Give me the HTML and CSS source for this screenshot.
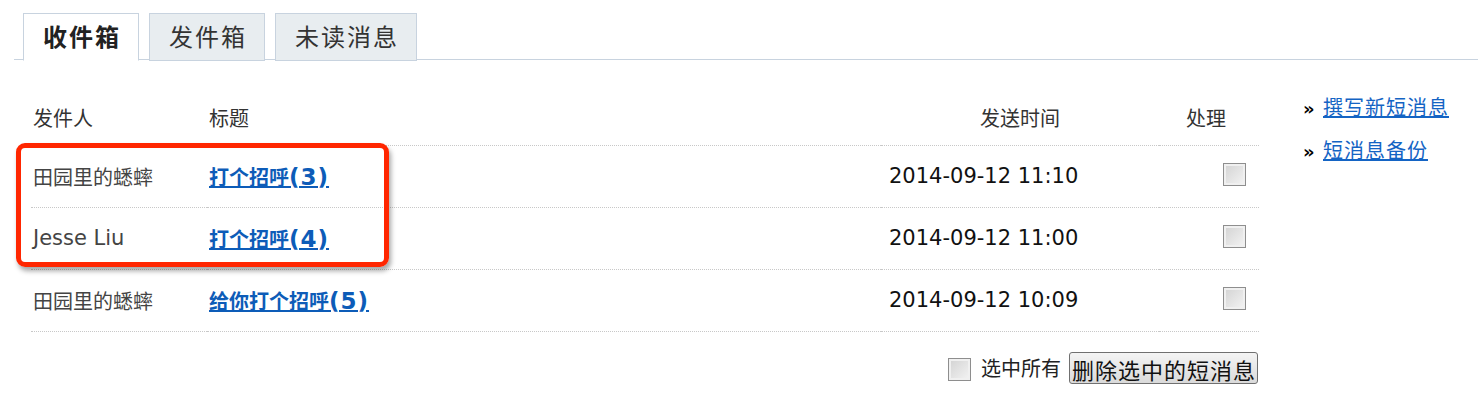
FILE: index.html
```html
<!DOCTYPE html>
<html lang="zh-CN">
<head>
    <meta charset="UTF-8">
    <title>短消息 - 收件箱</title>
    <link rel="stylesheet" href="styles.css">
</head>
<body>
    <div class="tabs">
        <a class="tab active" href="#">收件箱</a>
        <a class="tab" href="#">发件箱</a>
        <a class="tab" href="#">未读消息</a>
    </div>
    <div class="main">
        <div class="inbox">
            <table class="msg-table">
                <thead>
                    <tr>
                        <th class="col-from">发件人</th>
                        <th class="col-title">标题</th>
                        <th class="col-time">发送时间</th>
                        <th class="col-act">处理</th>
                    </tr>
                </thead>
                <tbody>
                    <tr>
                        <td class="col-from">田园里的蟋蟀</td>
                        <td class="col-title"><a href="#">打个招呼<span class="num">(3)</span></a></td>
                        <td class="col-time">2014-09-12 11:10</td>
                        <td class="col-act"><input type="checkbox"></td>
                    </tr>
                    <tr>
                        <td class="col-from latin">Jesse Liu</td>
                        <td class="col-title"><a href="#">打个招呼<span class="num">(4)</span></a></td>
                        <td class="col-time">2014-09-12 11:00</td>
                        <td class="col-act"><input type="checkbox"></td>
                    </tr>
                    <tr>
                        <td class="col-from">田园里的蟋蟀</td>
                        <td class="col-title"><a href="#">给你打个招呼<span class="num">(5)</span></a></td>
                        <td class="col-time">2014-09-12 10:09</td>
                        <td class="col-act"><input type="checkbox"></td>
                    </tr>
                </tbody>
            </table>
            <div class="actions">
                <label><input type="checkbox"> 选中所有</label>
                <button type="button">删除选中的短消息</button>
            </div>
            <div class="highlight"></div>
        </div>
        <ul class="side">
            <li><span class="arrow">»</span><a href="#">撰写新短消息</a></li>
            <li><span class="arrow">»</span><a href="#">短消息备份</a></li>
        </ul>
    </div>
</body>
</html>
```
FILE: styles.css
```css
body {
    margin: 0;
    background: #fff;
    color: #333;
    font-family: "DejaVu Sans", "Noto Sans CJK SC", sans-serif;
}

.tabs {
    display: flex;
    gap: 10px;
    margin: 13px 6px 0 14px;
    padding-left: 9px;
    border-bottom: 1px solid #c8d3df;
    height: 46px;
}

.tab {
    display: block;
    height: 46px;
    line-height: 48px;
    padding: 0 17px 0 19px;
    border: 1px solid #c8d3df;
    background: #e8edf0;
    color: #333;
    font-size: 24px;
    letter-spacing: 2px;
    text-decoration: none;
}

.tab.active {
    background: #fff;
    border-bottom-color: #fff;
    font-weight: bold;
    color: #222;
}

.main {
    display: flex;
    margin-left: 31px;
    padding-top: 30px;
}

.inbox {
    position: relative;
    width: 1228px;
    flex: none;
}

.msg-table {
    width: 1228px;
    border-collapse: collapse;
    table-layout: fixed;
}

.msg-table th,
.msg-table td {
    box-sizing: border-box;
}

.msg-table th {
    height: 55px;
    font-size: 20px;
    font-weight: normal;
    color: #333;
    text-align: left;
    padding: 0 0 0 2px;
}

.msg-table td {
    height: 62px;
    border-top: 1px dotted #c8c8c8;
    padding: 0 0 0 2px;
    font-size: 20px;
}

.msg-table tbody tr:last-child td {
    border-bottom: 1px dotted #c8c8c8;
}

.col-from { width: 176px; color: #444; }
.col-title { width: 674px; }
.col-time { width: 278px; }
.col-act { width: 100px; }

.msg-table td.latin {
    font-size: 21px;
}

.msg-table td.col-time {
    font-size: 21px;
    color: #111;
    padding-left: 8px;
}

.msg-table th.col-time {
    text-align: center;
    padding-left: 0;
}

.msg-table th.col-act {
    padding-left: 27px;
}

.msg-table td.col-act {
    text-align: right;
    padding-right: 13px;
}

.col-title a {
    color: #0d5cb8;
    font-weight: bold;
    text-decoration: underline;
}

.col-title .num {
    font-size: 23px;
    letter-spacing: 1px;
}

input[type=checkbox] {
    -webkit-appearance: none;
    appearance: none;
    width: 23px;
    height: 23px;
    margin: 0;
    border: 1px solid #8e8e8e;
    background: linear-gradient(135deg, #d2d2d2, #f4f4f4);
    box-shadow: inset 0 0 0 2px #f0f0f0;
    vertical-align: middle;
    position: relative;
    top: -3px;
}

.actions {
    display: flex;
    justify-content: flex-end;
    align-items: center;
    gap: 8px;
    margin-top: 20px;
    padding-right: 1px;
    font-size: 20px;
    color: #222;
}

.actions label input {
    top: -1px;
    margin-right: 4px;
}

.actions button {
    height: 32px;
    padding: 0 1px 0 2px;
    border: 1px solid #707070;
    border-radius: 3px;
    background: linear-gradient(#f4f4f4, #dadada);
    font-family: "DejaVu Sans", "Noto Sans CJK SC", sans-serif;
    font-size: 22px;
    letter-spacing: 1px;
    color: #111;
}

.highlight {
    position: absolute;
    left: -15px;
    top: 53px;
    width: 363px;
    height: 114px;
    border: 5px solid #ff2600;
    border-radius: 9px;
    box-shadow: 2px 4px 5px rgba(0, 0, 0, 0.35);
}

.side {
    list-style: none;
    margin: 0 0 0 44px;
    padding: 0;
}

.side li {
    height: 43px;
    line-height: 36px;
    font-size: 20px;
}

.side .arrow {
    display: inline-block;
    width: 20px;
    color: #000;
    font-size: 18px;
    font-weight: bold;
}

.side a {
    color: #1464c4;
    text-decoration: underline;
    letter-spacing: 1px;
}
```
